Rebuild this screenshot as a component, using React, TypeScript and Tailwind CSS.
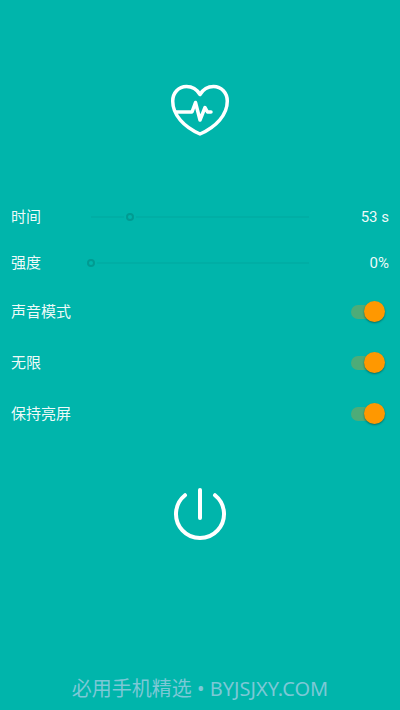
import { useState } from 'react';

interface SliderRowProps {
  id: string;
  label: string;
  value: number;
  max: number;
  unit: string;
  onChange: (value: number) => void;
}

const SliderRow = ({ id, label, value, max, unit, onChange }: SliderRowProps) => {
  return (
    <div className="flex h-[46px] items-center">
      <label htmlFor={id} className="w-[76px] shrink-0">{label}</label>
      <input
        id={id}
        type="range"
        min={0}
        max={max}
        value={value}
        onChange={(e) => onChange(Number(e.target.value))}
        className="h-5 min-w-0 flex-1 cursor-pointer appearance-none bg-[linear-gradient(#00aea5,#00aea5)] bg-[length:calc(100%-8px)_2px] bg-center bg-no-repeat [&::-webkit-slider-thumb]:size-2 [&::-webkit-slider-thumb]:appearance-none [&::-webkit-slider-thumb]:rounded-full [&::-webkit-slider-thumb]:border-2 [&::-webkit-slider-thumb]:border-[#009b92] [&::-webkit-slider-thumb]:bg-[#00b5ab] [&::-webkit-slider-thumb]:shadow-[0_0_0_2px_#00b5ab]"
      />
      <output htmlFor={id} className="w-[76px] shrink-0 text-right">{value}{unit}</output>
    </div>
  );
};

interface SwitchRowProps {
  id: string;
  label: string;
  checked: boolean;
  onChange: (checked: boolean) => void;
}

const SwitchRow = ({ id, label, checked, onChange }: SwitchRowProps) => {
  return (
    <div className="flex h-[51px] items-center justify-between">
      <label htmlFor={id}>{label}</label>
      <input
        id={id}
        type="checkbox"
        role="switch"
        checked={checked}
        onChange={(e) => onChange(e.target.checked)}
        className="mr-1 flex h-[14px] w-[34px] cursor-pointer appearance-none items-center rounded-full bg-black/20 before:size-[21px] before:shrink-0 before:rounded-full before:bg-gray-100 before:shadow-[0_1px_2px_rgba(0,0,0,0.4)] checked:justify-end checked:bg-[#4dac78] checked:before:bg-[#ff9800]"
      />
    </div>
  );
};

const HeartIcon = () => (
  <svg className="h-[54px] w-[60px]" viewBox="0 0 60 54" fill="none" stroke="white" strokeWidth="3.500" strokeLinecap="round" strokeLinejoin="round">
    <path d="M30 10.500C27 5.500 22 2.500 16.500 2.500C8.500 2.500 2.700 8.800 2.700 17C2.700 31 14 43 30 50C46 43 57.300 31 57.300 17C57.300 8.800 51.500 2.500 43.500 2.500C38 2.500 33 5.500 30 10.500Z" />
    <path d="M6 28H22L25.500 18.500L30 36L35 23.500L37.500 28H41" />
  </svg>
);

const PowerIcon = () => (
  <svg className="h-[54px] w-[54px]" viewBox="0 0 54 54" fill="none" stroke="white" strokeWidth="4" strokeLinecap="round">
    <path d="M27 3V31" />
    <path d="M12 8.200A24 24 0 1 0 42 8.200" />
  </svg>
);

const App = () => {
  const [time, setTime] = useState(53);
  const [strength, setStrength] = useState(0);
  const [sound, setSound] = useState(true);
  const [infinite, setInfinite] = useState(true);
  const [keepAwake, setKeepAwake] = useState(true);

  return (
    <div className="flex min-h-screen flex-col bg-[#00b5ab] font-[Roboto,'Noto_Sans_CJK_SC',sans-serif] text-[15px] leading-5 text-white/95">
      {/* Logo */}
      <header className="flex justify-center pt-[84px] pb-14">
        <HeartIcon />
      </header>

      {/* Settings */}
      <main className="px-[11px]">
        <SliderRow id="time" label="时间" value={time} max={300} unit=" s" onChange={setTime} />
        <SliderRow id="strength" label="强度" value={strength} max={100} unit="%" onChange={setStrength} />
        <SwitchRow id="sound" label="声音模式" checked={sound} onChange={setSound} />
        <SwitchRow id="infinite" label="无限" checked={infinite} onChange={setInfinite} />
        <SwitchRow id="awake" label="保持亮屏" checked={keepAwake} onChange={setKeepAwake} />
      </main>

      {/* Power button */}
      <div className="flex justify-center pt-12">
        <button type="button" aria-label="开关" className="cursor-pointer">
          <PowerIcon />
        </button>
      </div>

      <footer className="mt-auto pb-[7px] text-center font-['Noto_Sans','Noto_Sans_CJK_SC',sans-serif] text-[20px] leading-7 text-[#7cc8d6]">
        必用手机精选 • BYJSJXY.COM
      </footer>
    </div>
  );
};

export default App;
